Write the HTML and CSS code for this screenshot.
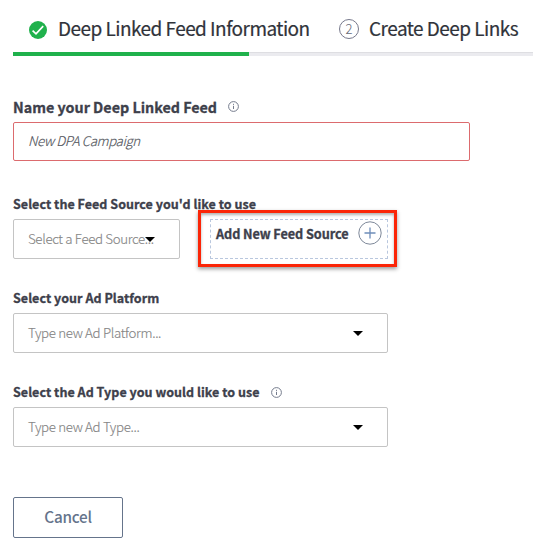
FILE: index.html
```html
<!DOCTYPE html>
<html lang="en">
<head>
<meta charset="utf-8">
<title>Deep Linked Feed</title>
<link rel="stylesheet" href="styles.css">
</head>
<body>
<header class="steps">
  <div class="step step-done">
    <svg class="check" viewBox="0 0 18 18"><circle cx="9" cy="9" r="9"/><path d="M3.6 9.6 7 12.8 14.2 5.2"/></svg>
    <span class="step-title">Deep Linked Feed Information</span>
  </div>
  <div class="step step-next">
    <span class="number">2</span>
    <span class="step-title">Create Deep Links</span>
  </div>
</header>
<div class="progress"><div class="progress-fill"></div></div>
<main class="form">
  <section class="field name-field">
    <div class="label label-large"><span>Name your Deep Linked Feed</span>
      <svg class="info" viewBox="0 0 11 11"><circle cx="5.5" cy="5.5" r="4.9"/><path d="M5.5 4.8V8M5.5 2.8V3.9"/></svg></div>
    <div class="box input"><span>New DPA Campaign</span></div>
  </section>
  <section class="field">
    <div class="label"><span>Select the Feed Source you'd like to use</span></div>
    <div class="row">
      <div class="box select small"><span>Select a Feed Source...</span><svg class="caret" viewBox="0 0 10 5"><path d="M0 0H10L5 5Z"/></svg></div>
      <div class="add"><span>Add New Feed Source</span>
        <svg class="plus" viewBox="0 0 24 24"><circle cx="12" cy="12" r="11.2"/><path d="M12 6.5V17.5M6.5 12H17.5"/></svg>
        <div class="highlight"></div>
      </div>
    </div>
  </section>
  <section class="field">
    <div class="label"><span>Select your Ad Platform</span></div>
    <div class="box select"><span>Type new Ad Platform...</span><svg class="caret" viewBox="0 0 10 5"><path d="M0 0H10L5 5Z"/></svg></div>
  </section>
  <section class="field">
    <div class="label"><span>Select the Ad Type you would like to use</span>
      <svg class="info" viewBox="0 0 11 11"><circle cx="5.5" cy="5.5" r="4.9"/><path d="M5.5 4.8V8M5.5 2.8V3.9"/></svg></div>
    <div class="box select"><span>Type new Ad Type...</span><svg class="caret" viewBox="0 0 10 5"><path d="M0 0H10L5 5Z"/></svg></div>
  </section>
  <button class="cancel" type="button">Cancel</button>
</main>
</body>
</html>
```
FILE: styles.css
```css
* { box-sizing: border-box; }
body {
  margin: 0;
  background: #fff;
  color: #3d404b;
  font-family: "Noto Sans CJK SC", "Open Sans", sans-serif;
  overflow: hidden;
}
svg { display: block; flex: none; fill: none; }
span { white-space: nowrap; }
.steps { display: flex; height: 52px; padding: 6px 0 0 29px; }
.step { display: flex; align-items: center; height: 46px; }
.step-done { width: 310px; }
.step-title { margin-bottom: 2px; font-size: 19px; line-height: 28px; letter-spacing: -0.54px; color: #30333a; -webkit-text-stroke: 0.2px #30333a; }
.check { width: 18px; height: 18px; margin: 2px 11px 0 0; }
.check circle { fill: #20b14c; }
.check path { stroke: #fff; stroke-width: 1.7; }
.number {
  width: 20px; height: 20px; margin-right: 10px;
  border: 1px solid #77798c; border-radius: 50%;
  font-size: 13px; font-weight: 300; line-height: 18px; text-align: center; color: #666978;
}
.progress { height: 4px; margin-left: 13px; background: #ebebef; border-top: 1px solid #dedee2; }
.progress-fill { width: 236px; height: 4px; margin-top: -1px; background: #20b14c; }
.form { padding: 39px 0 0 13px; }
.field { height: 94px; }
.name-field { height: 97px; }
.label {
  display: flex; align-items: center; height: 24px; margin-bottom: 3px;
  font-size: 12.5px; font-weight: 700; line-height: 18px; letter-spacing: 0.04px;
  -webkit-text-stroke: 0.3px #3d404b;
}
.label-large { font-size: 14.3px; letter-spacing: 0; }
.info { width: 11px; height: 11px; margin-left: 11px; }
.label-large .info { margin-bottom: 2px; }
.info circle, .info path { stroke: #747b8c; stroke-width: 1; }
.box {
  display: flex; align-items: center; width: 375px; height: 40px; padding: 0 14px 1px;
  border: 1px solid #c4c4c4; border-radius: 2px;
  font-size: 13.3px; font-weight: 300; line-height: 20px; letter-spacing: -0.34px; color: #858585;
  -webkit-text-stroke: 0.15px currentColor;
}
.input { width: 457px; height: 39px; padding-bottom: 1px; border-color: #dc6b6e; color: #54575e; font-style: italic; letter-spacing: -0.4px; }
.select { position: relative; }
.caret { position: absolute; right: 24px; top: 17px; width: 10px; height: 5px; fill: #000; }
.row { display: flex; gap: 30px; }
.small { width: 167px; }
.add {
  position: relative; display: flex; width: 178px; height: 40px; padding: 0 5px;
  border: 1px dashed #b9c7de; font-size: 12.7px; font-weight: 700; line-height: 28px; letter-spacing: -0.08px;
  -webkit-text-stroke: 0.3px #3d404b;
}
.plus { position: absolute; left: 147px; top: 1px; width: 24px; height: 24px; }
.plus circle { stroke: #7e8899; }
.plus path { stroke: #6e8db9; stroke-width: 1.3; }
.highlight {
  position: absolute; left: -13px; top: -10px; width: 199px; height: 57px;
  border: 3px solid #fb2507; box-shadow: 0 2px 4px rgba(0,0,0,.4), inset 0 2px 3px rgba(0,0,0,.3);
}
.cancel {
  display: block; width: 110px; height: 41px; margin-top: 23px; padding: 0 0 4px;
  border: 1px solid #65748b; border-radius: 2px; background: #fff; color: #65748b;
  font: 500 15.3px/20px "Noto Sans CJK SC", sans-serif; letter-spacing: -0.25px;
}
```
